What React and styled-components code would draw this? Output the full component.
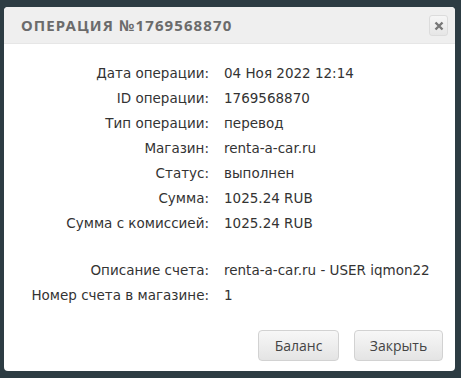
import React from 'react';
import styled, { createGlobalStyle } from 'styled-components';

const GlobalStyle = createGlobalStyle`
  html, body {
    margin: 0;
    padding: 0;
    background: #2d3c43;
  }
  * { box-sizing: border-box; }
`;

const Overlay = styled.div`
  width: 461px;
  height: 378px;
  padding: 7px 6px 7px 4px;
`;

const Dialog = styled.div`
  height: 364px;
  background: #fff;
  border-radius: 4px;
  overflow: hidden;
  display: flex;
  flex-direction: column;
`;

const Header = styled.div`
  height: 37px;
  background: #efefef;
  border-bottom: 1px solid #e6e6e6;
  display: flex;
  align-items: center;
  justify-content: space-between;
  padding: 0 7px 0 17px;
`;

const Title = styled.h2`
  margin: 0;
  font-family: "Noto Sans", sans-serif;
  font-size: 15px;
  font-weight: 700;
  letter-spacing: 1.1px;
  color: #6b6b6b;
`;

const CloseButton = styled.button`
  width: 19px;
  height: 21px;
  padding: 0;
  border: 1px solid #dcdcdc;
  border-radius: 3px;
  background: linear-gradient(#f6f6f6, #e6e6e6);
  display: flex;
  align-items: center;
  justify-content: center;
  margin-top: 1px;
`;

const Body = styled.div`
  flex: 1;
  padding: 17px 12px 10px 0;
  display: flex;
  flex-direction: column;
`;

const Info = styled.div`
  display: grid;
  grid-template-columns: 205px 1fr;
  column-gap: 15px;
  font-family: "DejaVu Sans", sans-serif;
  font-size: 13.5px;
  color: #333;
`;

const Label = styled.div`
  text-align: right;
  line-height: 25px;
  white-space: nowrap;
  margin-top: ${({ $gap }) => ($gap ? '22px' : '0')};
`;

const Value = styled.div`
  line-height: 25px;
  white-space: nowrap;
  margin-top: ${({ $gap }) => ($gap ? '22px' : '0')};
`;

const Footer = styled.div`
  margin-top: auto;
  display: flex;
  justify-content: flex-end;
  gap: 15px;
`;

const Button = styled.button`
  height: 31px;
  padding: 0;
  width: ${({ $w }) => $w}px;
  border: 1px solid #d2d2d2;
  border-radius: 4px;
  background: linear-gradient(#f7f7f7, #e4e4e4);
  font-family: "Open Sans", sans-serif;
  font-size: 14px;
  color: #444;
`;

const rows = [
  ['Дата операции:', '04 Ноя 2022 12:14'],
  ['ID операции:', '1769568870'],
  ['Тип операции:', 'перевод'],
  ['Магазин:', 'renta-a-car.ru'],
  ['Статус:', 'выполнен'],
  ['Сумма:', '1025.24 RUB'],
  ['Сумма с комиссией:', '1025.24 RUB'],
  ['Описание счета:', 'renta-a-car.ru - USER iqmon22', true],
  ['Номер счета в магазине:', '1'],
];

export default function App() {
  return (
    <>
      <GlobalStyle />
      <Overlay>
        <Dialog>
          <Header>
            <Title>ОПЕРАЦИЯ №1769568870</Title>
            <CloseButton>
              <svg width="10" height="10" viewBox="0 0 10 10">
                <path d="M1.5 1.5L8.5 8.5M8.5 1.5L1.5 8.5" stroke="#777" strokeWidth="2.4" />
              </svg>
            </CloseButton>
          </Header>
          <Body>
            <Info>
              {rows.map(([l, v, gap]) => (
                <React.Fragment key={l}>
                  <Label $gap={gap}>{l}</Label>
                  <Value $gap={gap}>{v}</Value>
                </React.Fragment>
              ))}
            </Info>
            <Footer>
              <Button $w={81}>Баланс</Button>
              <Button $w={89}>Закрыть</Button>
            </Footer>
          </Body>
        </Dialog>
      </Overlay>
    </>
  );
}
